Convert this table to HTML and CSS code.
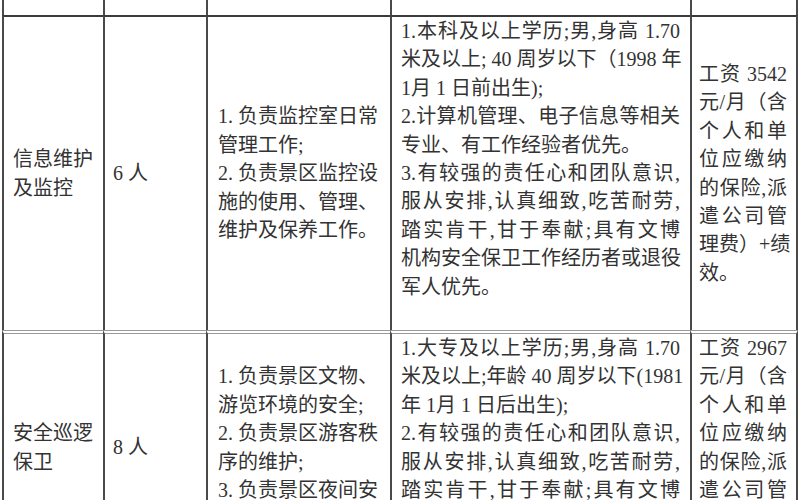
FILE: index.html
```html
<!DOCTYPE html>
<html lang="zh-CN">
<head>
<meta charset="utf-8">
<title>岗位表</title>
<link rel="stylesheet" href="styles.css">
</head>
<body>
<div class="sheet">
  <div class="c r0 p1"></div>
  <div class="c r0 p2"></div>
  <div class="c r0 p3"></div>
  <div class="c r0 p4"></div>
  <div class="c r0 p5 last"></div>

  <div class="c r1 p1"><span>信息维护</span><span>及监控</span></div>
  <div class="c r1 p2"><span>6 人</span></div>
  <div class="c r1 p3">
    <span>1. 负责监控室日常</span>
    <span>管理工作;</span>
    <span>2. 负责景区监控设</span>
    <span>施的使用、管理、</span>
    <span>维护及保养工作。</span>
  </div>
  <div class="c r1 p4 top">
    <span class="ln">1.本科及以上学历;男,身高 1.70</span>
    <span class="ln">米及以上; 40 周岁以下（1998 年</span>
    <span class="ln end">1月 1 日前出生);</span>
    <span class="ln">2.计算机管理、电子信息等相关</span>
    <span class="ln end">专业、有工作经验者优先。</span>
    <span class="ln">3.有较强的责任心和团队意识,</span>
    <span class="ln">服从安排,认真细致,吃苦耐劳,</span>
    <span class="ln">踏实肯干,甘于奉献;具有文博</span>
    <span class="ln">机构安全保卫工作经历者或退役</span>
    <span class="ln end">军人优先。</span>
  </div>
  <div class="c r1 p5 last">
    <span class="ln">工资 3542</span>
    <span class="ln">元/月（含</span>
    <span class="ln">个人和单</span>
    <span class="ln">位应缴纳</span>
    <span class="ln">的保险,派</span>
    <span class="ln">遣公司管</span>
    <span class="ln">理费）+绩</span>
    <span class="ln end">效。</span>
  </div>

  <div class="c r2 p1"><span>安全巡逻</span><span>保卫</span></div>
  <div class="c r2 p2"><span>8 人</span></div>
  <div class="c r2 p3">
    <span>1. 负责景区文物、</span>
    <span>游览环境的安全;</span>
    <span>2. 负责景区游客秩</span>
    <span>序的维护;</span>
    <span>3. 负责景区夜间安</span>
    <span>全巡查工作。</span>
  </div>
  <div class="c r2 p4 top">
    <span class="ln">1.大专及以上学历;男,身高 1.70</span>
    <span class="ln">米及以上;年龄 40 周岁以下(1981</span>
    <span class="ln end">年 1月 1 日后出生);</span>
    <span class="ln">2.有较强的责任心和团队意识,</span>
    <span class="ln">服从安排,认真细致,吃苦耐劳,</span>
    <span class="ln">踏实肯干,甘于奉献;具有文博</span>
    <span class="ln">机构安全保卫工作经历者或退役</span>
    <span class="ln end">军人优先。</span>
  </div>
  <div class="c r2 p5 last">
    <span class="ln">工资 2967</span>
    <span class="ln">元/月（含</span>
    <span class="ln">个人和单</span>
    <span class="ln">位应缴纳</span>
    <span class="ln">的保险,派</span>
    <span class="ln">遣公司管</span>
    <span class="ln">理费）+绩</span>
    <span class="ln end">效。</span>
  </div>
</div>
</body>
</html>
```

FILE: styles.css
```css
html, body {
  margin: 0;
  padding: 0;
  background: #ffffff;
  overflow: hidden;
}

body {
  font-family: "Liberation Serif", "Noto Sans CJK SC", sans-serif;
  font-size: 20px;
  line-height: 28.4px;
  color: #333333;
}

.sheet {
  display: grid;
  grid-template-columns: 101px 103px 184px 300px 108px;
  margin-left: 2px;
}

.c {
  box-sizing: border-box;
  border-left: 2px solid #4a4a4a;
  display: flex;
  flex-direction: column;
  justify-content: center;
  white-space: nowrap;
}

.c.last {
  border-right: 2px solid #4a4a4a;
}

.c.top {
  justify-content: flex-start;
}

.r0 {
  height: 15px;
}

.r1 {
  height: 315px;
  border-top: 2px solid #3a3a3a;
}

.r2 {
  border-top: 4px double #9a9a9a;
}

.p1 { padding-left: 9px; }
.p2 { padding-left: 8px; }
.p3 { padding-left: 10px; }
.p4 { padding-left: 9px; padding-right: 10px; }
.p5 { padding-left: 7px; padding-right: 9px; }

.ln {
  display: block;
  text-align: justify;
  text-align-last: justify;
}

.ln.end {
  text-align-last: left;
}
```
